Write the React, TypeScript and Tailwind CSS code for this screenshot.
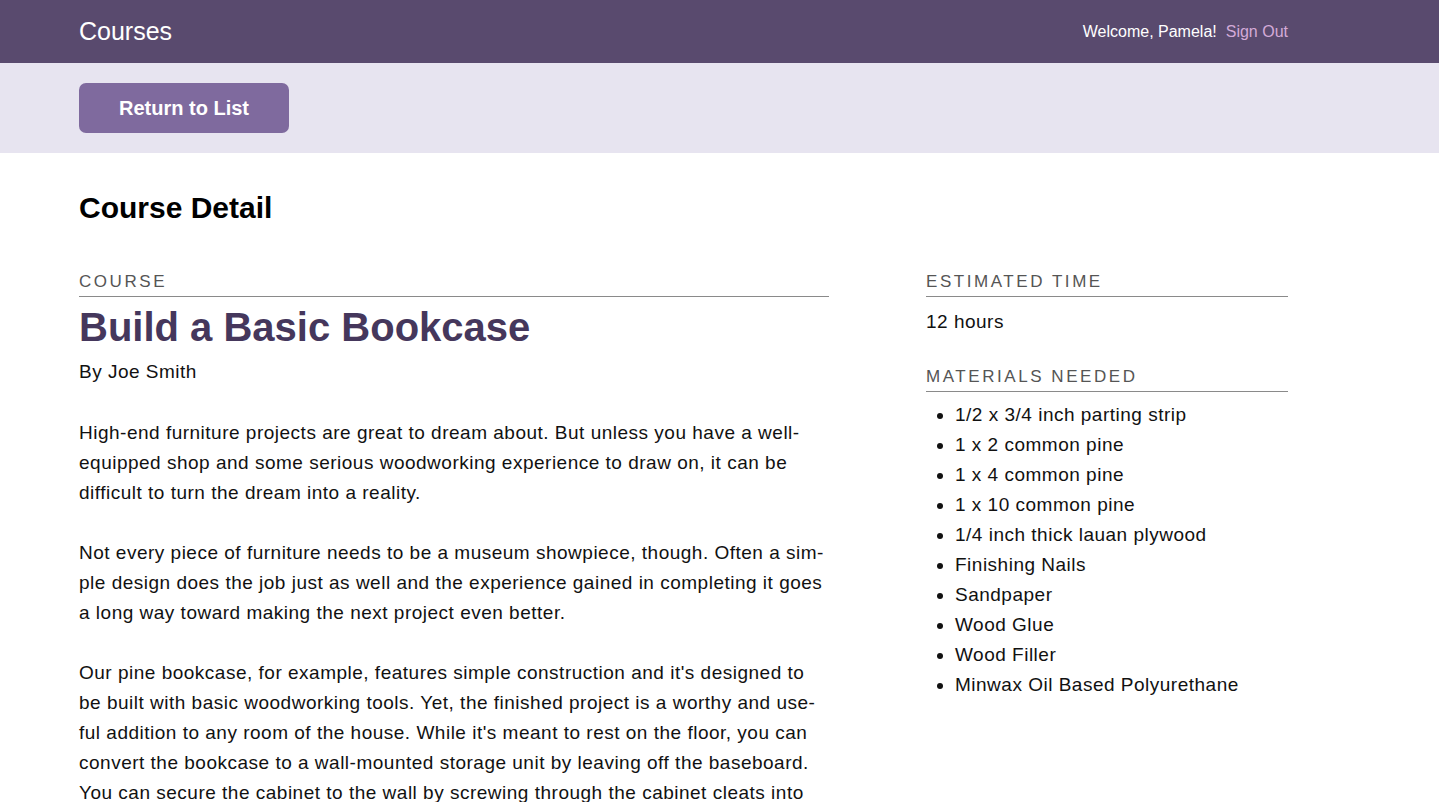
const materials = [
  '1/2 x 3/4 inch parting strip',
  '1 x 2 common pine',
  '1 x 4 common pine',
  '1 x 10 common pine',
  '1/4 inch thick lauan plywood',
  'Finishing Nails',
  'Sandpaper',
  'Wood Glue',
  'Wood Filler',
  'Minwax Oil Based Polyurethane',
];

const paragraphs = [
  'High-end furniture projects are great to dream about. But unless you have a well-equipped shop and some serious woodworking experience to draw on, it can be difficult to turn the dream into a reality.',
  'Not every piece of furniture needs to be a museum showpiece, though. Often a sim\u00ADple design does the job just as well and the experience gained in completing it goes a long way toward making the next project even better.',
  "Our pine bookcase, for example, features simple construction and it's designed to be built with basic woodworking tools. Yet, the finished project is a worthy and use\u00ADful addition to any room of the house. While it's meant to rest on the floor, you can convert the bookcase to a wall-mounted storage unit by leaving off the baseboard. You can secure the cabinet to the wall by screwing through the cabinet cleats into the wall studs.",
];

const body = 'text-[19px] leading-[30px] tracking-[0.5px] text-[#111]';

export default function App() {
  return (
    <div className="min-h-screen bg-white font-['Liberation_Sans',Arial,sans-serif] text-black" lang="en">
      <header className="h-[63px] bg-[#594a6e]">
        <div className="mx-auto flex h-full w-[1281px] items-center justify-between pr-[72px]">
          <span className="text-[25px] text-white">Courses</span>
          <div className="flex items-center gap-[9px] text-[16px]">
            <span className="text-white">Welcome, Pamela!</span>
            <a className="text-[#d4aad8]">Sign Out</a>
          </div>
        </div>
      </header>

      <div className="h-[90px] bg-[#e7e4f0]">
        <div className="mx-auto flex h-full w-[1281px] items-center pr-[72px]">
          <button className="h-[50px] w-[210px] rounded-[7px] bg-[#7f6a9e] text-[20px] font-bold text-white">
            Return to List
          </button>
        </div>
      </div>

      <main className="mx-auto w-[1281px] pr-[72px]">
        <h1 className="pt-[37px] text-[30px] leading-[36px] font-bold">Course Detail</h1>

        <div className="mt-[45px] flex justify-between">
          <div className="w-[750px]">
            <SectionLabel>Course</SectionLabel>
            <h2 className="mt-[5px] text-[40px] leading-[50px] font-bold text-[#45375c]">Build a Basic Bookcase</h2>
            <p className={`mt-[5px] ${body}`}>By Joe Smith</p>
            <div className="mt-[31px] space-y-[30px]">
              {paragraphs.map((p) => (
                <p key={p.slice(0, 20)} className={body}>
                  {p}
                </p>
              ))}
            </div>
          </div>

          <div className="w-[362px]">
            <SectionLabel>Estimated Time</SectionLabel>
            <p className={`mt-[10px] ${body}`}>12 hours</p>

            <div className="mt-[29px]">
              <SectionLabel>Materials Needed</SectionLabel>
              <ul className="mt-[8px] list-disc pl-[29px]">
                {materials.map((m) => (
                  <li key={m} className={body}>
                    {m}
                  </li>
                ))}
              </ul>
            </div>
          </div>
        </div>
      </main>
    </div>
  );
}

function SectionLabel({ children }: { children: React.ReactNode }) {
  return (
    <div className="border-b border-[#8a8a8a] pb-[3px] text-[17px] leading-[22px] tracking-[0.15em] text-[#555] uppercase">
      {children}
    </div>
  );
}
